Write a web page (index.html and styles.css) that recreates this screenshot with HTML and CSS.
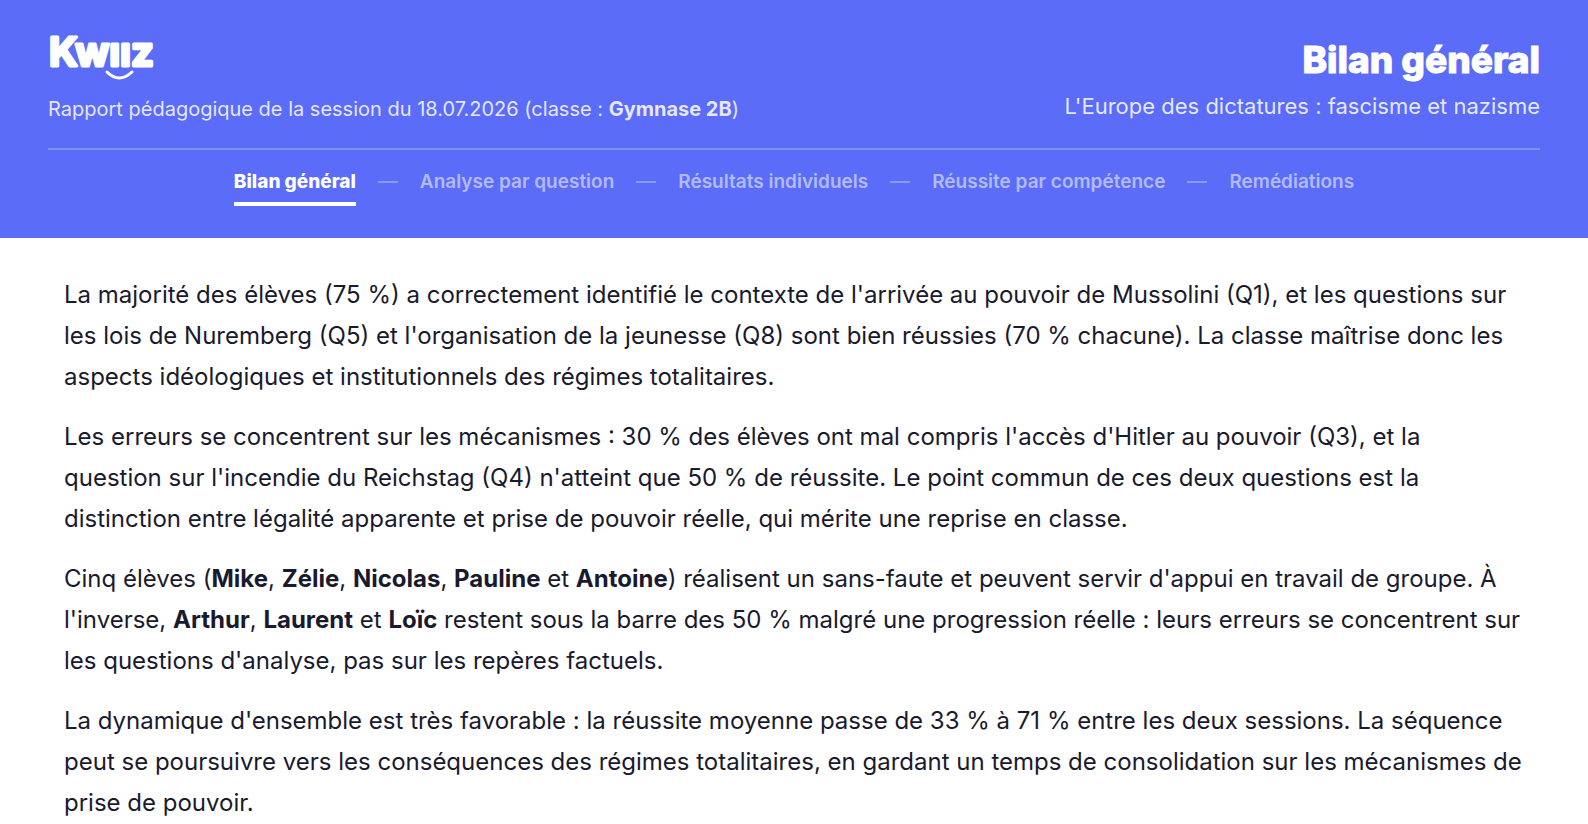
FILE: index.html
```html
<!DOCTYPE html>
<html lang="fr">
<head>
    <meta charset="UTF-8">
    <meta name="viewport" content="width=device-width, initial-scale=1.0">
    <title>Kwiiz - Bilan général</title>
    <link rel="stylesheet" href="styles.css">
</head>
<body>
    <header class="header">
        <div class="header-top">
            <div class="header-left">
                <svg class="logo" width="120" height="48" viewBox="0 0 120 48" role="img" aria-label="Kwiiz">
                    <text class="logo-text" x="1" y="34">Kwıız</text>
                    <path class="logo-smile" d="M59 40 Q71 52 84 40"/>
                </svg>
                <p class="session">Rapport pédagogique de la session du 18.07.2026 (classe : <strong>Gymnase 2B</strong>)</p>
            </div>
            <div class="header-right">
                <h1>Bilan général</h1>
                <p class="subject">L'Europe des dictatures : fascisme et nazisme</p>
            </div>
        </div>
        <nav class="nav">
            <a href="#bilan" class="active">Bilan général</a>
            <span class="sep"></span>
            <a href="#questions">Analyse par question</a>
            <span class="sep"></span>
            <a href="#individuels">Résultats individuels</a>
            <span class="sep"></span>
            <a href="#competences">Réussite par compétence</a>
            <span class="sep"></span>
            <a href="#remediations">Remédiations</a>
        </nav>
    </header>

    <main class="content" id="bilan">
        <p>La majorité des élèves (75 %) a correctement identifié le contexte de l'arrivée au pouvoir de Mussolini (Q1), et les questions sur les lois de Nuremberg (Q5) et l'organisation de la jeunesse (Q8) sont bien réussies (70 % chacune). La classe maîtrise donc les aspects idéologiques et institutionnels des régimes totalitaires.</p>
        <p>Les erreurs se concentrent sur les mécanismes : 30 % des élèves ont mal compris l'accès d'Hitler au pouvoir (Q3), et la question sur l'incendie du Reichstag (Q4) n'atteint que 50 % de réussite. Le point commun de ces deux questions est la distinction entre légalité apparente et prise de pouvoir réelle, qui mérite une reprise en classe.</p>
        <p>Cinq élèves (<strong>Mike</strong>, <strong>Zélie</strong>, <strong>Nicolas</strong>, <strong>Pauline</strong> et <strong>Antoine</strong>) réalisent un sans-faute et peuvent servir d'appui en travail de groupe. À l'inverse, <strong>Arthur</strong>, <strong>Laurent</strong> et <strong>Loïc</strong> restent sous la barre des 50 % malgré une progression réelle : leurs erreurs se concentrent sur les questions d'analyse, pas sur les repères factuels.</p>
        <p>La dynamique d'ensemble est très favorable : la réussite moyenne passe de 33 % à 71 % entre les deux sessions. La séquence peut se poursuivre vers les conséquences des régimes totalitaires, en gardant un temps de consolidation sur les mécanismes de prise de pouvoir.</p>
    </main>
</body>
</html>
```
FILE: styles.css
```css
* {
    box-sizing: border-box;
    margin: 0;
    padding: 0;
}

body {
    font-family: Inter, "Liberation Sans", sans-serif;
    background: #fff;
    color: #1a1a2e;
}

.header {
    background: #5b6cf9;
    color: #fff;
    padding: 32px 48px;
}

.header-top {
    display: flex;
    justify-content: space-between;
    align-items: center;
    padding-bottom: 25px;
    border-bottom: 2px solid rgba(255, 255, 255, 0.25);
}

.logo {
    display: block;
    overflow: visible;
}

.logo-text {
    font-size: 40px;
    font-weight: 700;
    fill: #fff;
    stroke: #fff;
    stroke-width: 3px;
    stroke-linejoin: round;
}

.logo-smile {
    fill: none;
    stroke: #fff;
    stroke-width: 3px;
    stroke-linecap: round;
}

.session {
    margin-top: 15px;
    font-size: 20px;
    line-height: 28px;
    color: rgba(255, 255, 255, 0.85);
}

.header-right {
    text-align: right;
}

h1 {
    font-size: 37px;
    line-height: 48px;
    font-weight: 800;
    -webkit-text-stroke: 1px #fff;
}

.subject {
    margin-top: 8px;
    font-size: 22px;
    line-height: 28px;
    color: rgba(255, 255, 255, 0.85);
}

.nav {
    display: flex;
    justify-content: center;
    align-items: flex-start;
    gap: 22px;
    padding-top: 20px;
}

.nav a {
    font-size: 19px;
    line-height: 24px;
    font-weight: 600;
    color: rgba(255, 255, 255, 0.55);
    text-decoration: none;
    padding-bottom: 8px;
    border-bottom: 4px solid transparent;
}

.nav a.active {
    font-weight: 800;
    color: #fff;
    border-bottom-color: #fff;
}

.sep {
    width: 20px;
    height: 2px;
    margin-top: 11px;
    background: rgba(255, 255, 255, 0.3);
}

.content {
    padding: 36px 64px 0;
    font-size: 24px;
    line-height: 41px;
}

.content p {
    margin-bottom: 19px;
}

.content p:last-child {
    margin-bottom: 0;
}
```
